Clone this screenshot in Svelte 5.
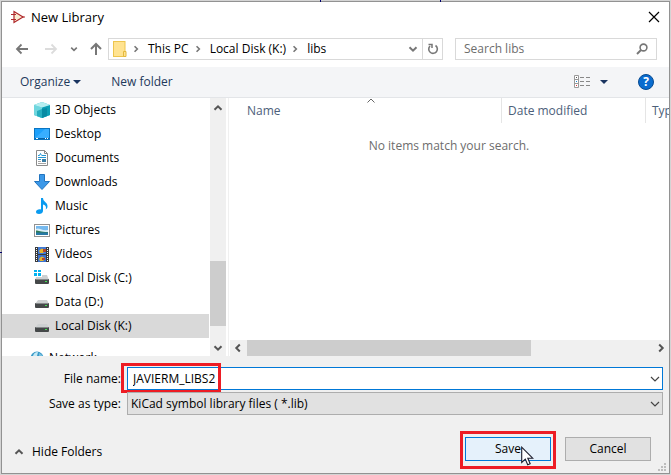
<script>
  const places = [
    { name: '3D Objects', icon: 'cube' },
    { name: 'Desktop', icon: 'desktop' },
    { name: 'Documents', icon: 'doc' },
    { name: 'Downloads', icon: 'down' },
    { name: 'Music', icon: 'music' },
    { name: 'Pictures', icon: 'picture' },
    { name: 'Videos', icon: 'video' },
    { name: 'Local Disk (C:)', icon: 'windisk' },
    { name: 'Data (D:)', icon: 'disk' },
    { name: 'Local Disk (K:)', icon: 'disk', selected: true },
  ];
  const crumbs = ['This PC', 'Local Disk (K:)', 'libs'];
  let fileName = $state('JAVIERM_LIBS2');
  let search = $state('');
</script>

{#snippet chevron(dir, size = 10)}
  <svg class="chev {dir}" width={size} height={size} viewBox="0 0 10 10" aria-hidden="true">
    <path d="M1.5 3.2 5 6.7 8.5 3.2" fill="none" stroke="currentColor" stroke-width="2" />
  </svg>
{/snippet}

{#snippet thinChevron()}
  <svg class="thin" width="10" height="10" viewBox="0 0 10 10" aria-hidden="true">
    <path d="M1 3 5 7 9 3" fill="none" stroke="#444" stroke-width="1.2" />
  </svg>
{/snippet}

{#snippet placeIcon(kind)}
  <svg width="16" height="16" viewBox="0 0 16 16" aria-hidden="true">
    {#if kind === 'cube'}
      <path d="M0 3 8 0l8 3v10l-8 3-8-3z" fill="#35bccb" />
      <path d="M0 3 8 5.5V16L0 13z" fill="#6fd6de" />
      <path d="M8 5.5 16 3v10l-8 3z" fill="#0b9fb5" />
      <path d="M0 3 8 0l8 3-8 2.5z" fill="#b5eef0" />
      <path d="M3 9 8 7v9l-5-2z" fill="#25aebf" />
      <path d="M8 7l5-1v8l-5 2z" fill="#078ba3" />
    {:else if kind === 'desktop'}
      <rect x="0.5" y="2.5" width="15" height="11" fill="#1ca0fb" stroke="#0a75c2" />
      <path d="M1 12 11 3h4v9z" fill="#38aeff" />
      <path d="M1 12.5h14" stroke="#0763a8" />
      <path d="M2 12.5h2m7 0h1m1 0h1" stroke="#fff" />
    {:else if kind === 'doc'}
      <path d="M2.5 .5h8l3 3v12h-11z" fill="#fff" stroke="#8b8b8b" />
      <path d="M10.5 .5v3h3" fill="none" stroke="#8b8b8b" />
      <path d="M4 5.5h1.5l1-2 1 2M8 5.5h4M4 7.5h8M4 9.5h3" fill="none" stroke="#2497d4" />
      <path d="M4 11.5h3M4 13.5h8" stroke="#a5a5a5" />
      <rect x="8" y="9" width="4" height="3" fill="#397da4" />
    {:else if kind === 'down'}
      <path d="M5.5 .5h5v7h5L8 15.5 .5 7.5h5z" fill="#3b98e8" stroke="#2274bf" />
    {:else if kind === 'music'}
      <path d="M7 0h2c0 4 5 4 4.5 9-.2 1.2-1 2-1.8 2.5C12.8 8.5 11 7 9 6.5V13c0 2-2 3-4 3s-3-1-3-2.3C2 12 4.5 11 7 11.5z" fill="#0a9bf0" />
    {:else if kind === 'picture'}
      <rect x="0.5" y="2.5" width="15" height="12" fill="#fff" stroke="#929292" />
      <rect x="2" y="4" width="12" height="9" fill="#76b9ee" />
      <path d="M2 7c3-2 5 2 12 1v2H2z" fill="#d9eef8" />
      <path d="M2 8.5c3 0 4 1.5 12 1.5v1H2z" fill="#307a55" />
      <path d="M2 10.5h12V13H2z" fill="#2779a6" />
    {:else if kind === 'video'}
      <rect x="1" y="1" width="14" height="15" fill="#3a3a3a" />
      <path d="M2.5 2v14M13.5 2v14" stroke="#fff" stroke-dasharray="1 1" />
      <rect x="4" y="1" width="8" height="7" fill="#3f79d4" />
      <rect x="4" y="9" width="8" height="7" fill="#3b71cf" />
      <path d="M5 5q3-5 6 0l-2 2H6zM5 13q3-5 6 0l-2 2H6z" fill="#e5b52c" />
      <path d="M9 3h3v3H9zM8 12h3v2H8z" fill="#b5462c" />
    {:else}
      {#if kind === 'windisk'}
        <path d="M0 0h3v2H0zM4 0h3v2H4zM0 3h3v3H0zM4 3h3v3H4z" fill="#00b2f0" />
      {/if}
      <path d={kind === 'disk' ? 'M4 6h9l2 4H1z' : 'M8 5h5l2 5H1l1-3h6z'} fill="#cdd0d1" />
      <rect x="1" y="9" width="14" height="5" rx="1" fill="#454849" />
      <path d="M2 9.5h12" stroke="#85898a" />
      <rect x="11" y="11" width="2" height="1" fill="#42e354" />
    {/if}
  </svg>
{/snippet}

<div class="screen">
  <div class="tick t1"></div>
  <div class="tick t2"></div>
  <div class="tick t3"></div>
  <main class="dialog">
    <header class="title">
      <svg width="14" height="14" viewBox="0 0 14 14" aria-hidden="true">
        <path d="M3 1.5 12 7l-9 5.5z" fill="#f9ecd2" stroke="#b0282b" stroke-width="1.2" />
        <path d="M0 4.5h5M0 9.5h5M11 7h3" stroke="#b0282b" />
      </svg>
      <h1>New Library</h1>
      <button class="plain close" aria-label="Close">
        <svg width="12" height="12" viewBox="0 0 12 12"><path d="m1 1 10 10M11 1 1 11" stroke="#000" stroke-width="1.2" /></svg>
      </button>
    </header>

    <nav class="nav">
      <button class="plain" aria-label="Back">
        <svg width="14" height="12" viewBox="0 0 14 12"><path d="M13 6H2M6.5 1.5 2 6l4.5 4.5" fill="none" stroke="#777" stroke-width="1.8" /></svg>
      </button>
      <button class="plain" aria-label="Forward" disabled>
        <svg width="14" height="12" viewBox="0 0 14 12"><path d="M1 6h11M7.5 1.5 12 6l-4.5 4.5" fill="none" stroke="#dcdcdc" stroke-width="1.8" /></svg>
      </button>
      <button class="plain recent" aria-label="Recent locations">{@render chevron('down', 8)}</button>
      <button class="plain" aria-label="Up">
        <svg width="12" height="14" viewBox="0 0 12 14"><path d="M6 13V2M1 7l5-5 5 5" fill="none" stroke="#777" stroke-width="2" /></svg>
      </button>
      <div class="address">
        <svg class="folder" width="14" height="16" viewBox="0 0 14 16" aria-hidden="true">
          <rect x="0.5" y="0.5" width="11.5" height="15" fill="#ffe391" stroke="#edc54d" />
          <path d="M10.5 15.5v-5h2.5v5z" fill="#ffe391" stroke="#e4b83d" />
        </svg>
        {#each crumbs as crumb}
          {@render chevron('right', 8)}
          <button class="plain crumb">{crumb}</button>
        {/each}
        <button class="plain history" aria-label="Previous locations">{@render chevron('down')}</button>
        <button class="plain refresh" aria-label="Refresh">
          <svg width="12" height="12" viewBox="0 0 12 12"><path d="M8.5 2.5A4.3 4.3 0 1 1 3 3" fill="none" stroke="#777" stroke-width="1.6" /><path d="M1.500 1.500H5V5" fill="none" stroke="#777" stroke-width="1.5" /></svg>
        </button>
      </div>
      <label class="search">
        <input type="text" aria-label="Search libs" placeholder="Search libs" bind:value={search} />
        <svg width="12" height="12" viewBox="0 0 12 12" aria-hidden="true"><circle cx="7.5" cy="4.5" r="3.4" fill="none" stroke="#777" stroke-width="1.6" /><path d="M5 7 1 11" stroke="#777" stroke-width="2" /></svg>
      </label>
    </nav>

    <div class="toolbar">
      <button class="plain organize">Organize <svg width="8" height="4" viewBox="0 0 8 4" aria-hidden="true"><path d="M0 0h8L4 4z" fill="#1a3560" /></svg></button>
      <button class="plain">New folder</button>
      <button class="plain views" aria-label="Change your view">
        <svg width="16" height="14" viewBox="0 0 16 14">
          <path d="M.5.5h4v12h-4zM.5 4.5h4M.5 8.5h4" fill="#fff" stroke="#999" />
          <path d="M6 2.5h4m2 0h4M6 6.5h4m2 0h4M6 10.5h4m2 0h4" stroke="#888" />
          <path d="M2 2.5h1" stroke="#555" /><path d="M2 6.5h1" stroke="#1986d9" /><path d="M2 10.5h1" stroke="#d33" />
        </svg>
        <svg width="8" height="4" viewBox="0 0 8 4"><path d="M0 0h8L4 4z" fill="#1a3560" /></svg>
      </button>
      <button class="plain help" aria-label="Help">?</button>
    </div>

    <div class="body">
      <div class="tree">
        <ul>
          {#each places as place}
            <li class:selected={place.selected}>{@render placeIcon(place.icon)}<span>{place.name}</span></li>
          {/each}
          <li class="network">
            <svg width="14" height="14" viewBox="0 0 14 14" aria-hidden="true"><circle cx="7" cy="7" r="6.5" fill="#3a9ac8" /><path d="M3 5q1-4 5-4L7 5z" fill="#c5e9f4" /><path d="M9 2q3 1 4 4H9z" fill="#79c0df" /></svg>
            <span>Network</span>
          </li>
        </ul>
      </div>
      <div class="vscroll">
        {@render chevron('up')}
        <div class="thumb"></div>
        {@render chevron('down')}
      </div>
      <section class="files">
        <div class="columns">
          <div class="col name">Name
            <svg class="sort" width="8" height="5" viewBox="0 0 8 5" aria-hidden="true"><path d="M.5 4.5 4 1l3.5 3.5" fill="none" stroke="#666" /></svg>
          </div>
          <div class="col date">Date modified</div>
          <div class="col type">Type</div>
        </div>
        <p class="empty">No items match your search.</p>
        <div class="hscroll">
          {@render chevron('left')}
          <div class="track"><div class="thumb"></div></div>
          {@render chevron('right')}
        </div>
      </section>
    </div>

    <form class="form" onsubmit={(e) => e.preventDefault()}>
      <label for="fname">File name:</label>
      <div class="combo">
        <input id="fname" type="text" bind:value={fileName} />
        {@render thinChevron()}
        <div class="mark name-mark"></div>
      </div>
      <label for="ftype">Save as type:</label>
      <div class="combo">
        <select id="ftype"><option>KiCad symbol library files ( *.lib)</option></select>
        {@render thinChevron()}
      </div>
    </form>

    <footer class="footer">
      <button class="plain hide">{@render chevron('up')}<span>Hide Folders</span></button>
      <div class="save-wrap">
        <button class="btn primary">Save</button>
        <div class="mark save-mark"></div>
        <svg class="cursor" width="13" height="20" viewBox="0 0 13 20" aria-hidden="true">
          <path d="M.7 1.2v15.3l3.6-3.4 2.4 5.7 2.5-1-2.4-5.6h4.9z" fill="#fff" stroke="#1b1b2b" stroke-width="1.1" />
        </svg>
      </div>
      <button class="btn">Cancel</button>
      <svg class="grip" width="9" height="9" viewBox="0 0 9 9" aria-hidden="true">
        <path d="M6 0h2v2H6zM3 3h2v2H3zM6 3h2v2H6zM0 6h2v2H0zM3 6h2v2H3zM6 6h2v2H6z" fill="#bdbdbd" />
      </svg>
    </footer>
  </main>
</div>

<style>
  :global(body) { margin: 0; }
  .screen {
    position: relative;
    box-sizing: border-box;
    height: 100vh;
    min-height: 400px;
    padding: 1px;
    background: #d4d4d4;
    font-family: "Open Sans", "Noto Sans", sans-serif;
    font-size: 12px;
    line-height: 16px;
    color: #000;
  }
  .screen *, .screen *::before { box-sizing: border-box; }
  .tick { position: absolute; background: #00006e; }
  .t1 { top: 0; left: 320px; width: 1px; height: 2px; }
  .t2 { top: 0; left: 440px; width: 1px; height: 2px; }
  .t3 { top: 252px; left: 0; width: 2px; height: 1px; }
  .dialog {
    display: flex;
    flex-direction: column;
    height: 100%;
    border: 1px solid #929292;
    background: #fff;
    overflow: hidden;
  }
  button, input, select { font: inherit; color: inherit; }
  svg { display: block; flex: none; }
  .plain { display: flex; align-items: center; border: 0; padding: 0; background: none; white-space: nowrap; }
  .chev { color: #555; }
  .chev.up { transform: rotate(180deg); }
  .chev.left { transform: rotate(90deg); }
  .chev.right { transform: rotate(-90deg); }

  .title { display: flex; align-items: center; flex: none; height: 30px; padding: 0 9px; }
  h1 { margin: 0 0 0 6px; font-size: 13px; font-weight: 400; }
  .close { margin-left: auto; }

  .nav { display: flex; align-items: center; flex: none; height: 33px; padding: 0 12px 0 13px; margin-bottom: 2px; }
  .nav > .plain + .plain { margin-left: 15px; }
  .nav .chev { color: #777; }
  .nav > .plain + .recent { margin-left: 12px; }
  .nav > .recent + .plain { margin-left: 12px; }
  .address {
    display: flex;
    align-items: center;
    flex: 335 1 335px;
    min-width: 0;
    height: 22px;
    margin-left: 6px;
    border: 1px solid #d9d9d9;
    padding-left: 4px;
  }
  .folder { margin-right: 5px; }
  .crumb { margin: 0 5px 0 8px; }
  .history { margin-left: auto; margin-right: 4px; }
  .refresh { justify-content: center; width: 20px; height: 20px; border-left: 1px solid #d9d9d9; }
  .search {
    display: flex;
    align-items: center;
    flex: 202 1 202px;
    min-width: 0;
    height: 22px;
    margin-left: 12px;
    border: 1px solid #d9d9d9;
    padding: 0 8px;
  }
  .search input { flex: 1; min-width: 0; border: 0; padding: 0; background: none; outline: none; }
  .search input::placeholder { color: #6d6d6d; opacity: 1; }

  .toolbar {
    display: flex;
    align-items: center;
    flex: none;
    height: 31px;
    padding: 0 15px 0 18px;
    border-bottom: 1px solid #e3e5e8;
    background: #f4f5f7;
    color: #1e395b;
  }
  .organize { gap: 3px; margin-right: 30px; }
  .views { gap: 10px; margin-left: auto; }
  .help {
    justify-content: center;
    width: 16px;
    height: 16px;
    margin-left: 30px;
    border: 1px solid #084b91;
    border-radius: 50%;
    background: #0a6ccf;
    color: #fff;
    font-weight: 700;
  }

  .body { display: flex; flex: 1; min-height: 0; }
  .tree { flex: none; width: 208px; padding-right: 1px; overflow: hidden; }
  ul { margin: 0; padding: 0; list-style: none; }
  li { display: flex; align-items: center; gap: 5px; height: 24px; padding-left: 32px; }
  .selected { background: #d9d9d9; }
  .network { height: 24px; margin-top: 8px; padding-left: 28px; }
  .vscroll { display: flex; flex-direction: column; align-items: center; flex: none; width: 16px; padding: 5px 0 3px; background: #f0f0f0; }
  .vscroll .thumb { width: 100%; height: 65px; margin: auto 0 17px; background: #cdcdcd; }
  .files { display: flex; flex-direction: column; flex: 1; min-width: 0; margin-left: 2px; border-left: 1px solid #f0f0f0; overflow: hidden; }
  .columns { display: flex; flex: none; height: 25px; line-height: 25px; color: #4c607a; overflow: hidden; }
  .col { position: relative; border-right: 1px solid #e5e5e5; white-space: nowrap; }
  .name { flex: 1; padding-left: 18px; }
  .date { flex: none; width: 144px; padding-left: 6px; }
  .type { flex: none; width: 23px; padding-left: 6px; border: 0; overflow: hidden; }
  .sort { position: absolute; top: 0; left: 50%; margin-left: 2px; }
  .empty { flex: 1; margin: 0; padding-top: 15px; text-align: center; color: #6d6d6d; }
  .hscroll { display: flex; align-items: center; flex: none; height: 16px; margin-left: 1px; padding: 0 3px; background: #f0f0f0; }
  .track { flex: 1; margin: 0 4px; }
  .hscroll .thumb { width: 70%; height: 16px; background: #cdcdcd; }

  .form {
    display: grid;
    grid-template-columns: 119px 1fr;
    column-gap: 6px;
    row-gap: 2px;
    align-items: center;
    flex: none;
    padding: 11px 6px 0 0;
    background: #f0f0f0;
  }
  .form label { text-align: right; }
  .combo { position: relative; display: grid; align-items: center; }
  .combo > input, .combo > select, .thin { grid-area: 1 / 1; }
  .combo input, .combo select {
    width: 100%;
    height: 23px;
    border: 1px solid #0078d7;
    border-radius: 0;
    padding: 0 24px 0 5px;
    background: #fff;
    outline: none;
  }
  .combo select { appearance: none; padding-left: 3px; border-color: #adadad; background: #e1e1e1; }
  .thin { justify-self: end; margin-right: 3px; pointer-events: none; }
  .mark { position: absolute; border: 3px solid #ed1c24; pointer-events: none; }
  .name-mark { top: -4px; left: -6px; width: 100px; height: 30px; }
  .save-mark { inset: -6px -5px -8px; }

  .footer { position: relative; display: flex; align-items: center; flex: none; height: 58px; padding: 10px 18px 0 12px; background: #f0f0f0; gap: 14px; }
  .hide { gap: 8px; margin-right: auto; padding-top: 6px; }
  .save-wrap { position: relative; }
  .btn { width: 86px; height: 24px; margin: 0; border: 1px solid #adadad; padding: 0; background: #e1e1e1; }
  .primary { display: block; border-color: #0078d7; background: #e5f1fb; }
  .cursor { position: absolute; top: 9px; left: 56px; }
  .grip { position: absolute; right: 2px; bottom: 1px; }
</style>
